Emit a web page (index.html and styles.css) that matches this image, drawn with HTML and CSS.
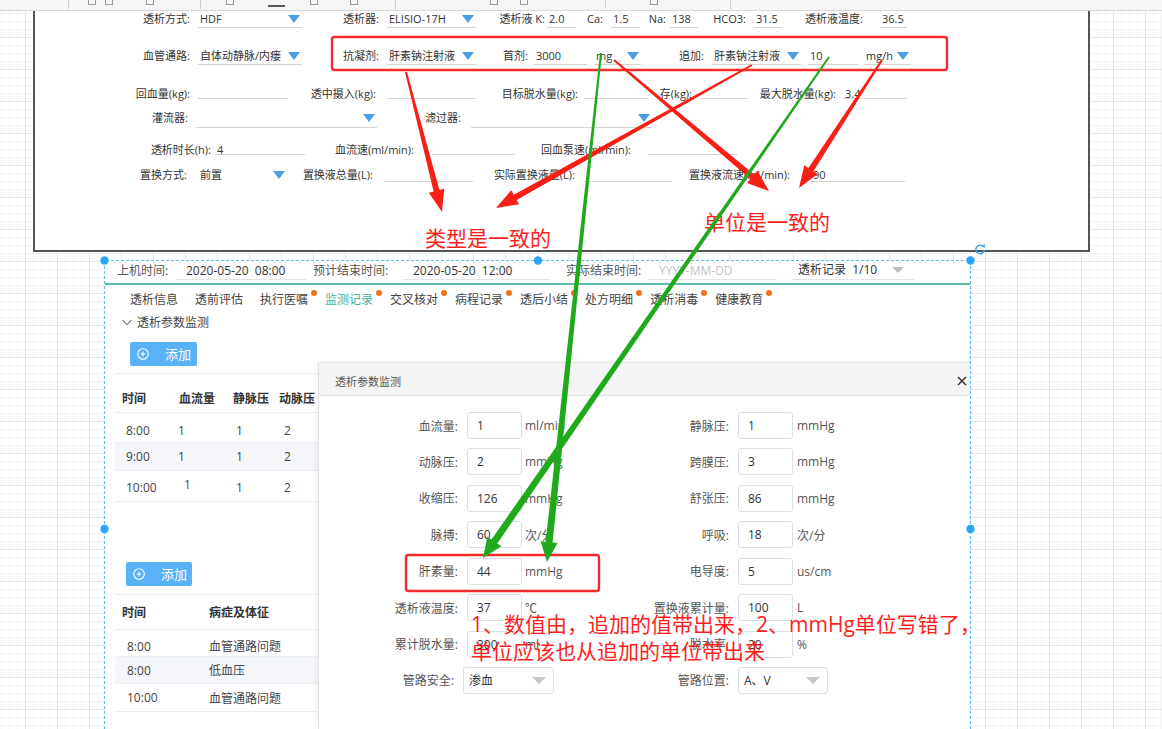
FILE: index.html
```html
<!DOCTYPE html>
<html lang="zh-CN">
<head>
<meta charset="utf-8">
<title>透析参数监测</title>
<link rel="stylesheet" href="styles.css">
</head>
<body>
<header class="toolbar">
  <span class="tb-sep"></span><span class="tb-ic"></span><span class="tb-ic"></span><span class="tb-ic"></span>
  <span class="tb-sep"></span><span class="tb-ic"></span><span class="tb-bar"></span><span class="tb-ic"></span>
  <span class="tb-ic"></span><span class="tb-sep"></span><span class="tb-ic"></span><span class="tb-ic"></span>
  <span class="tb-sep"></span><span class="tb-ic"></span><span class="tb-sep"></span>
</header>

<main class="canvas">
  <section class="shot-top">
    <div class="frow r1">
      <span class="lb w163">透析方式:</span><span class="sel w104">HDF<i class="tri"></i></span>
      <span class="lb w85">透析器:</span><span class="sel w89">ELISIO-17H<i class="tri"></i></span>
      <span class="lb w71 pr2">透析液 K:</span><span class="inp w29">2.0</span>
      <span class="lb w35">Ca:</span><span class="inp w29">1.5</span>
      <span class="lb w30 pr4">Na:</span><span class="inp w28">138</span>
      <span class="lb w56">HCO3:</span><span class="inp w28">31.5</span>
      <span class="lb w98 pr17">透析液温度:</span><span class="inp w27">36.5</span>
    </div>
    <div class="frow r2">
      <span class="lb w163">血管通路:</span><span class="sel w104">自体动静脉/内瘘<i class="tri"></i></span>
      <span class="lb w85">抗凝剂:</span><span class="sel w89">肝素钠注射液<i class="tri"></i></span>
      <span class="lb w58 pr6">首剂:</span><span class="inp w53">3000</span>
      <span class="sp w7"></span><span class="sel w47">mg<i class="tri"></i></span>
      <span class="lb w71">追加:</span><span class="sel w89">肝素钠注射液<i class="tri"></i></span>
      <span class="sp w7"></span><span class="inp w50">10</span>
      <span class="sp w6"></span><span class="sel w47">mg/h<i class="tri"></i></span>
    </div>
    <div class="frow r3">
      <span class="lb w163">回血量(kg):</span><span class="inp w90"></span>
      <span class="lb w99 pr11">透中摄入(kg):</span><span class="inp w89"></span>
      <span class="lb w108 pr6">目标脱水量(kg):</span><span class="inp w64"></span>
      <span class="lb w53 pr9">存(kg):</span><span class="inp w47"></span>
      <span class="lb w95 pr7">最大脱水量(kg):</span><span class="inp w64">3.4</span>
    </div>
    <div class="frow r4">
      <span class="lb w161">灌流器:</span><span class="sel w181"><i class="tri"></i></span>
      <span class="lb w94 pr10">滤过器:</span><span class="sel w181"><i class="tri"></i></span>
    </div>
    <div class="frow r5">
      <span class="lb w180 pr4">透析时长(h):</span><span class="inp w90">4</span>
      <span class="lb w127 pr18">血流速(ml/min):</span><span class="inp w83"></span>
      <span class="lb w133 pr17">回血泵速(ml/min):</span><span class="inp w89"></span>
    </div>
    <div class="frow r6">
      <span class="lb w163 pr11">置换方式:</span><span class="sel nb w89">前置<i class="tri"></i></span>
      <span class="lb w98 pr12">置换液总量(L):</span><span class="inp w88"></span>
      <span class="lb w111 pr9">实际置换液量(L):</span><span class="inp w88"></span>
      <span class="lb w139 pr21">置换液流速(ml/min):</span><span class="inp w94">90</span>
    </div>
  </section>

  <section class="shot-bottom">
    <div class="hdr">
      <span class="hl hl1">上机时间:</span><span class="hv hv1">2020-05-20&nbsp;&nbsp;08:00</span>
      <span class="hl hl2">预计结束时间:</span><span class="hv hv2">2020-05-20&nbsp;&nbsp;12:00</span>
      <span class="hl hl3">实际结束时间:</span><span class="hv hv3">YYYY-MM-DD</span>
      <span class="hv hv4">透析记录&nbsp;&nbsp;1/10<i class="gtri"></i></span>
    </div>
    <nav class="tabs">
      <span class="tab">透析信息</span>
      <span class="tab">透前评估</span>
      <span class="tab dot">执行医嘱</span>
      <span class="tab dot on">监测记录</span>
      <span class="tab dot">交叉核对</span>
      <span class="tab dot">病程记录</span>
      <span class="tab dot">透后小结</span>
      <span class="tab dot">处方明细</span>
      <span class="tab dot">透析消毒</span>
      <span class="tab dot">健康教育</span>
    </nav>
    <div class="coll">
      <svg class="chev" width="10" height="7" viewBox="0 0 10 7"><polyline points="0.5,0.8 5,5.8 9.5,0.8" fill="none" stroke="#777" stroke-width="1.1"/></svg>
      <span>透析参数监测</span>
    </div>

    <div class="pane">
      <button class="btn btn1" type="button">
        <svg width="12" height="12" viewBox="0 0 12 12"><circle cx="6" cy="6" r="5.3" fill="none" stroke="#fff" stroke-width="1.1"/><path d="M3.6 6h4.8M6 3.6v4.8" stroke="#fff" stroke-width="1.1"/></svg>
        <span>添加</span>
      </button>
      <div class="tbl t1">
        <div class="tr th"><span class="c1">时间</span><span class="c2">血流量</span><span class="c3">静脉压</span><span class="c4">动脉压</span></div>
        <div class="tr td ra"><span class="c1">8:00</span><span class="c2">1</span><span class="c3">1</span><span class="c4">2</span></div>
        <div class="tr td rb"><span class="c1">9:00</span><span class="c2">1</span><span class="c3">1</span><span class="c4">2</span></div>
        <div class="tr td rc"><span class="c1">10:00</span><span class="c2 up">1</span><span class="c3">1</span><span class="c4">2</span></div>
      </div>

      <button class="btn btn2" type="button">
        <svg width="12" height="12" viewBox="0 0 12 12"><circle cx="6" cy="6" r="5.3" fill="none" stroke="#fff" stroke-width="1.1"/><path d="M3.6 6h4.8M6 3.6v4.8" stroke="#fff" stroke-width="1.1"/></svg>
        <span>添加</span>
      </button>
      <div class="tbl t2">
        <div class="tr th"><span class="c1">时间</span><span class="c2">病症及体征</span></div>
        <div class="tr td ra"><span class="c1">8:00</span><span class="c2">血管通路问题</span></div>
        <div class="tr td rb"><span class="c1">8:00</span><span class="c2">低血压</span></div>
        <div class="tr td rc"><span class="c1">10:00</span><span class="c2">血管通路问题</span></div>
      </div>
    </div>

    <div class="modal">
      <div class="mh">
        <span class="mt">透析参数监测</span>
        <svg class="close" width="10" height="10" viewBox="0 0 10 10"><path d="M1 1L9 9M9 1L1 9" stroke="#333" stroke-width="1.5"/></svg>
      </div>
      <div class="mb">
        <span class="ml">血流量:</span><span class="mi">1</span><span class="mu">ml/min</span>
        <span class="ml">静脉压:</span><span class="mi">1</span><span class="mu mu2">mmHg</span>

        <span class="ml">动脉压:</span><span class="mi">2</span><span class="mu">mmHg</span>
        <span class="ml">跨膜压:</span><span class="mi">3</span><span class="mu mu2">mmHg</span>

        <span class="ml">收缩压:</span><span class="mi">126</span><span class="mu">mmHg</span>
        <span class="ml">舒张压:</span><span class="mi">86</span><span class="mu mu2">mmHg</span>

        <span class="ml">脉搏:</span><span class="mi">60</span><span class="mu">次/分</span>
        <span class="ml">呼吸:</span><span class="mi">18</span><span class="mu mu2">次/分</span>

        <span class="ml">肝素量:</span><span class="mi">44</span><span class="mu">mmHg</span>
        <span class="ml">电导度:</span><span class="mi">5</span><span class="mu mu2">us/cm</span>

        <span class="ml">透析液温度:</span><span class="mi">37</span><span class="mu">℃</span>
        <span class="ml">置换液累计量:</span><span class="mi">100</span><span class="mu mu2">L</span>

        <span class="ml">累计脱水量:</span><span class="mi">300</span><span class="mu">ml</span>
        <span class="ml">脱水率:</span><span class="mi">20</span><span class="mu mu2">%</span>

        <span class="ml s1">管路安全:</span><span class="ms">渗血<i class="gtri2"></i></span>
        <span class="ml">管路位置:</span><span class="ms rs">A、V<i class="gtri2"></i></span>
      </div>
    </div>
  </section>

  <div class="note n1">类型是一致的</div>
  <div class="note n2">单位是一致的</div>
  <div class="note n3">1、数值由，追加的值带出来，2、mmHg单位写错了，<br>单位应该也从追加的单位带出来</div>

  <svg class="marks" width="1162" height="729" viewBox="0 0 1162 729">
    <path d="M104.5 729V260.5H970.5V729" fill="none" stroke="#5dbdf6" stroke-width="1.2" stroke-dasharray="3 2"/>
    <circle cx="104.5" cy="260.5" r="4.2" fill="#2ba6f6"/>
    <circle cx="538" cy="260.5" r="4.2" fill="#2ba6f6"/>
    <circle cx="970.5" cy="260.5" r="4.2" fill="#2ba6f6"/>
    <circle cx="104.5" cy="529" r="4.2" fill="#2ba6f6"/>
    <circle cx="970.5" cy="529" r="4.2" fill="#2ba6f6"/>
    <path d="M983.4 246.6A4.3 4.3 0 1 0 984.4 250.2" fill="none" stroke="#3ba8f2" stroke-width="1.5"/>
    <polygon points="981.2,245.6 985.2,244.2 984.6,248.2" fill="#3ba8f2"/>

    <rect x="332" y="37" width="615" height="33" rx="2.5" fill="none" stroke="#f42b2b" stroke-width="2.4"/>
    <rect x="406" y="555" width="193" height="36" rx="2.5" fill="none" stroke="#f42b2b" stroke-width="2.4"/>

    <g fill="#f82016">
      <polygon points="405.03,72.25 433.61,191.44 428.77,192.68 442,212 444.27,188.70 439.43,189.94 406.97,71.75"/>
      <polygon points="751.51,64.13 513.75,194.65 511.31,190.29 496,208 519.11,204.25 516.67,199.89 752.49,65.87"/>
      <polygon points="613.35,60.76 750.26,179.09 747.04,182.91 769,191 757.36,170.69 754.14,174.51 614.65,59.24"/>
      <polygon points="881.16,59.46 808.45,167.91 804.26,165.19 799,188 817.68,173.89 813.49,171.17 882.84,60.54"/>
    </g>
    <g fill="#1faa1c">
      <polygon points="600.01,52.89 545.63,541.74 540.66,541.21 547,562 557.56,543.01 552.59,542.48 601.99,53.11"/>
      <polygon points="828.18,56.43 491.49,539.55 487.38,536.71 483,558 501.36,546.37 497.25,543.53 829.82,57.57"/>
    </g>
  </svg>
</main>
</body>
</html>
```

FILE: styles.css
```css
* { box-sizing: border-box; margin: 0; padding: 0; }
html, body { width: 1162px; height: 729px; overflow: hidden; }
body {
  font-family: "Open Sans", "Noto Sans CJK SC", "Noto Sans", sans-serif;
  color: #333;
  background: #fff;
}

/* ---------- toolbar strip ---------- */
.toolbar {
  height: 11px;
  background: #f6f6f6;
  border-bottom: 1px solid #d7d7d7;
  display: grid;
  grid-template-columns: 20px 17px 41px 54px 26px 42px 42px 40px 45px 95px 30px 85px 45px 80px 20px;
  padding-left: 68px;
  overflow: hidden;
}
.tb-sep { width: 1px; height: 9px; background: #d0d0d0; }
.tb-ic { width: 8px; height: 5px; border: 1px solid #9a9a9a; border-top: 0; }
.tb-bar { width: 17px; height: 2px; margin-top: 5px; background: #555; }

/* ---------- drawing canvas ---------- */
.canvas {
  position: relative;
  height: 718px;
  overflow: hidden;
  background-color: #fff;
  background-image:
    linear-gradient(#e5e5e5 1px, transparent 1px),
    linear-gradient(90deg, #e5e5e5 1px, transparent 1px),
    linear-gradient(#f4f4f4 1px, transparent 1px),
    linear-gradient(90deg, #f4f4f4 1px, transparent 1px);
  background-size: 32px 32px, 32px 32px, 8px 8px, 8px 8px;
  background-position: 25px 26px, 25px 26px, 1px 2px, 1px 2px;
}

/* ---------- upper pasted screenshot ---------- */
.shot-top {
  position: absolute;
  left: 33px;
  top: 0;
  width: 1057px;
  height: 241px;
  background: #fff;
  border: 2px solid #545454;
  border-top: 0;
  font-size: 11px;
  color: #333;
}
.frow { display: flex; align-items: flex-start; }
.r1 { margin-top: 0.5px; height: 16px; }
.r2 { margin-top: 21.5px; height: 16px; }
.r3 { margin-top: 22px; height: 12px; }
.r4 { margin-top: 12px; height: 17px; }
.r5 { margin-top: 15px; height: 12px; }
.r6 { margin-top: 13px; height: 14px; }

.lb { flex: none; text-align: right; padding-right: 8px; line-height: 14px; white-space: nowrap; }
.sp { flex: none; }
.inp, .sel {
  flex: none;
  line-height: 14px;
  padding-left: 2px;
  border-bottom: 1px solid #d4d4d4;
  white-space: nowrap;
}
.r1 .inp, .r1 .sel, .r2 .inp, .r2 .sel { height: 16px; }
.r3 .inp, .r5 .inp { height: 12px; }
.r4 .sel { height: 17px; }
.r6 .inp, .r6 .sel { height: 14px; }
.sel { display: flex; justify-content: space-between; align-items: flex-start; padding-right: 2px; }
.sel.nb { border-bottom-color: transparent; }
.tri {
  flex: none;
  margin-top: 3px;
  margin-left: auto;
  width: 0; height: 0;
  border-left: 6px solid transparent;
  border-right: 6px solid transparent;
  border-top: 8px solid #4a9ee6;
}

.w6 { width: 6px; } .w7 { width: 7px; }
.w27 { width: 27px; } .w28 { width: 28px; } .w29 { width: 29px; } .w30 { width: 30px; }
.w35 { width: 35px; } .w47 { width: 47px; } .w50 { width: 50px; } .w53 { width: 53px; }
.w56 { width: 56px; } .w58 { width: 58px; } .w64 { width: 64px; } .w71 { width: 71px; }
.w83 { width: 83px; } .w85 { width: 85px; } .w88 { width: 88px; } .w89 { width: 89px; }
.w90 { width: 90px; } .w94 { width: 94px; } .w95 { width: 95px; } .w98 { width: 98px; }
.w99 { width: 99px; } .w104 { width: 104px; } .w108 { width: 108px; } .w111 { width: 111px; }
.w127 { width: 127px; } .w133 { width: 133px; } .w139 { width: 139px; } .w161 { width: 161px; }
.w163 { width: 163px; } .w180 { width: 180px; } .w181 { width: 181px; }
.pr2 { padding-right: 2px; } .pr4 { padding-right: 4px; } .pr6 { padding-right: 6px; }
.pr7 { padding-right: 7px; } .pr9 { padding-right: 9px; } .pr10 { padding-right: 10px; }
.pr11 { padding-right: 11px; } .pr12 { padding-right: 12px; } .pr17 { padding-right: 17px; }
.pr18 { padding-right: 18px; } .pr21 { padding-right: 21px; }

/* ---------- lower pasted screenshot ---------- */
.shot-bottom {
  position: absolute;
  left: 105px;
  top: 250px;
  width: 865px;
  height: 468px;
  background: #fff;
  overflow: hidden;
  font-size: 12px;
  color: #333;
}
.hdr {
  display: flex;
  height: 24px;
  padding-left: 12px;
  border-bottom: 2px solid #5cbcab;
  line-height: 20px;
  color: #555;
  white-space: nowrap;
}
.hl, .hv { flex: none; }
.hv { height: 19px; border-bottom: 1px solid #e4e4e4; color: #333; }
.hl1 { width: 59px; }
.hv1 { width: 130px; padding-left: 10px; }
.hl2 { width: 90px; margin-left: 7px; }
.hv2 { width: 147px; padding-left: 10px; }
.hl3 { width: 82px; margin-left: 16px; }
.hv3 { width: 129px; padding-left: 11px; color: #c0c4cc; }
.hv4 {
  width: 122px; margin-left: 15px; padding: 0 10px 0 6px;
  display: flex; justify-content: space-between; align-items: center;
}
.gtri {
  width: 0; height: 0;
  border-left: 6px solid transparent;
  border-right: 6px solid transparent;
  border-top: 6px solid #bdbdbd;
}

.tabs {
  display: flex;
  gap: 17px;
  padding-left: 25px;
  margin-top: 6px;
  line-height: 18px;
  color: #444;
}
.tab { position: relative; flex: none; white-space: nowrap; }
.tab.on { color: #3db3a1; }
.tab.dot::after {
  content: "";
  position: absolute;
  right: -9px;
  top: -1px;
  width: 6px;
  height: 6px;
  border-radius: 50%;
  background: #f5701a;
}

.coll {
  display: flex;
  align-items: center;
  gap: 5px;
  height: 18px;
  margin-top: 4px;
  padding-left: 17px;
  color: #444;
}
.chev { flex: none; }

.pane { padding-left: 10px; }
.btn {
  display: flex;
  align-items: center;
  gap: 16px;
  height: 24px;
  padding-left: 7px;
  border: 0;
  border-radius: 2px;
  background: #59b1f6;
  color: #fff;
  font-family: inherit;
  font-size: 13px;
  line-height: 24px;
}
.btn1 { width: 67px; margin: 11px 0 0 15px; }
.btn2 { width: 66px; margin: 60px 0 0 11px; }

.tbl { width: 855px; border-top: 1px solid #eeeeee; }
.t1 { margin-top: 7px; }
.t2 { margin-top: 8px; }
.tr { display: flex; align-items: center; border-bottom: 1px solid #ebeef5; white-space: nowrap; }
.tr span { flex: none; }
.th { font-weight: 700; color: #333; }
.th span { padding-left: 7px; }
.td { color: #444; }

.t1 .th { height: 39px; padding-top: 10px; }
.t1 .ra { height: 30px; padding-top: 6px; }
.t1 .rb { height: 28px; background: #f5f6fa; }
.t1 .rc { height: 31px; padding-top: 3px; }
.t1 .c1 { width: 57px; } .t1 .c2 { width: 54px; } .t1 .c3 { width: 46px; } .t1 .c4 { width: 60px; }
.t1 .td .c1 { padding-left: 11px; }
.t1 .td .c2 { padding-left: 6px; }
.t1 .td .c3 { padding-left: 10px; }
.t1 .td .c4 { padding-left: 12px; }
.t1 .td .c2.up { padding-left: 12px; padding-bottom: 6px; }

.t2 .th { height: 35px; }
.t2 .ra { height: 27px; padding-top: 6px; }
.t2 .rb { height: 27px; background: #f5f6fa; }
.t2 .rc { height: 28px; }
.t2 .c1 { width: 87px; } .t2 .c2 { width: 200px; }
.t2 .td .c1 { padding-left: 12px; }
.t2 .td .c2 { padding-left: 7px; }

/* ---------- dialog ---------- */
.modal {
  position: absolute;
  left: 213px;
  top: 101px;
  right: 0;
  bottom: 0;
  background: #fff;
  border-left: 1px solid #e0e0e0;
  border-top: 1px solid #e4e4e4;
  box-shadow: -2px 0 6px rgba(0, 0, 0, 0.05);
}
.mh {
  height: 33px;
  display: flex;
  justify-content: space-between;
  align-items: center;
  padding: 4px 3px 0 16px;
  background: #f5f5f5;
  border-bottom: 1px solid #e2e2e2;
}
.mt { font-size: 11px; color: #555; }
.close { flex: none; }
.mb {
  display: grid;
  grid-template-columns: 148px 55px 80px 136px 55px 1fr;
  grid-auto-rows: 27px;
  row-gap: 9.43px;
  align-items: center;
  padding-top: 16px;
  white-space: nowrap;
}
.ml { text-align: right; padding-right: 9px; color: #555; }
.ml.s1 { padding-right: 13px; }
.mi {
  height: 27px;
  padding-left: 9px;
  border: 1px solid #dcdfe6;
  border-radius: 3px;
  line-height: 25px;
  color: #333;
}
.mu { padding-left: 3px; color: #555; }
.mu2 { padding-left: 4px; }
.ms {
  grid-column: span 2;
  width: 91px;
  height: 27px;
  margin-left: -4px;
  padding: 0 7px 0 5px;
  display: flex;
  justify-content: space-between;
  align-items: center;
  border: 1px solid #dcdfe6;
  border-radius: 3px;
  color: #333;
}
.ms.rs { width: 90px; margin-left: 0; }
.gtri2 {
  width: 0; height: 0;
  border-left: 7px solid transparent;
  border-right: 7px solid transparent;
  border-top: 7px solid #c6c6c6;
}

/* ---------- annotations ---------- */
.note {
  position: absolute;
  z-index: 2;
  color: #ff1e1e;
  font-size: 21px;
  line-height: 24px;
  white-space: nowrap;
}
.n1 { left: 425px; top: 215px; }
.n2 { left: 704px; top: 199px; }
.n3 { left: 471px; top: 600px; line-height: 27px; }
.marks {
  position: absolute;
  left: 0;
  top: -11px;
  z-index: 3;
  pointer-events: none;
}
```
